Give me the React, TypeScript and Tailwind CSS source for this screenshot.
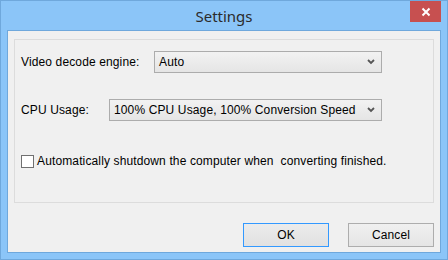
import React from "react";

function Chevron() {
  return (
    <svg width="8" height="6" viewBox="0 0 8 6" className="shrink-0">
      <polyline points="1,1 4,4 7,1" fill="none" stroke="#555" strokeWidth="1.8" />
    </svg>
  );
}

function Select({ width, value }: { width: string; value: string }) {
  return (
    <div
      className={`${width} h-[22px] border border-[#acacac] bg-gradient-to-b from-[#f2f2f2] to-[#e5e5e5] flex items-center justify-between pl-[4px] pr-[6px] text-[12px] text-black`}
    >
      <span className="leading-none">{value}</span>
      <Chevron />
    </div>
  );
}

export default function App() {
  return (
    <div
      className="relative w-[448px] h-[260px] bg-[#8bc5f8] border border-[#6fa8dc] flex flex-col overflow-hidden tracking-[0.13px]"
      style={{ fontFamily: '"Liberation Sans", Arial, sans-serif' }}
    >
      <div className="h-[29px] shrink-0 flex items-center justify-center">
        <span
          className="text-[15px] text-[#2b2b2b] mt-[2px] tracking-normal"
          style={{ fontFamily: '"Noto Sans", "Open Sans", sans-serif' }}
        >
          Settings
        </span>
      </div>
      <div className="absolute top-0 right-[6px] w-[31px] h-[21px] bg-[#c75050] flex items-center justify-center">
        <svg width="10" height="10" viewBox="0 0 10 10">
          <path d="M1.5 1.5 L8.5 8.5 M8.5 1.5 L1.5 8.5" stroke="white" strokeWidth="2" />
        </svg>
      </div>
      <div className="mx-[6px] h-[223px] border border-[#6fa8dc] bg-[#f0f0f0] flex flex-col px-[6px] pt-[8px]">
        <div className="border border-[#dcdcdc] px-[6px] pt-[11px] pb-[32px] text-[12px] text-black">
          <div className="flex items-center">
            <span className="w-[133px] shrink-0">Video decode engine:</span>
            <Select width="w-[228px]" value="Auto" />
          </div>
          <div className="flex items-center mt-[26px]">
            <span className="w-[88px] shrink-0">CPU Usage:</span>
            <Select width="w-[273px]" value="100% CPU Usage, 100% Conversion Speed" />
          </div>
          <div className="flex items-center mt-[31px]">
            <div className="w-[13px] h-[13px] border border-[#707070] bg-white shrink-0" />
            <span className="ml-[3px] whitespace-pre">
              Automatically shutdown the computer when  converting finished.
            </span>
          </div>
        </div>
        <div className="flex justify-end gap-[19px] mt-[20px]">
          <div className="w-[86px] h-[24px] border border-[#3399ff] bg-gradient-to-b from-[#ececec] to-[#e1e1e1] flex items-center justify-center text-[12px] text-black">
            OK
          </div>
          <div className="w-[86px] h-[24px] border border-[#adadad] bg-gradient-to-b from-[#f0f0f0] to-[#e5e5e5] flex items-center justify-center text-[12px] text-black">
            Cancel
          </div>
        </div>
      </div>
    </div>
  );
}
